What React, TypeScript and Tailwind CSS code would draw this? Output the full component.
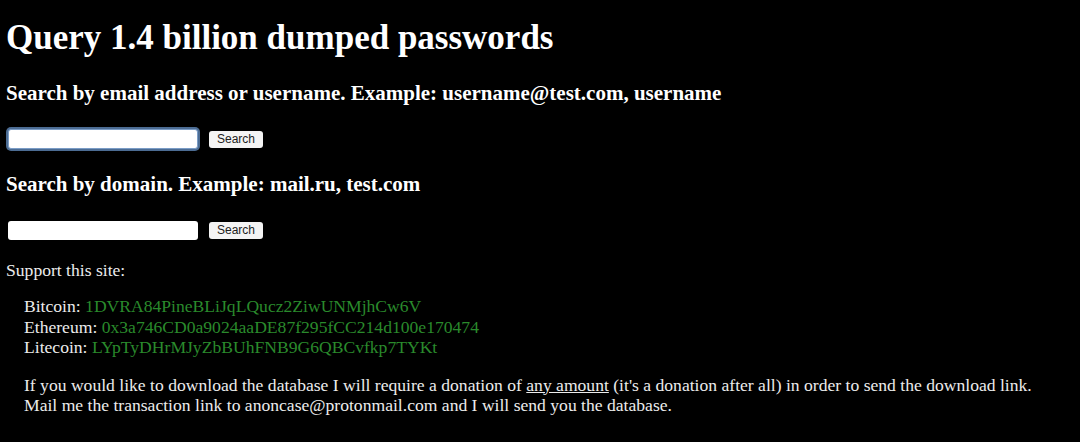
export default function App() {
  return (
    <div className="w-[1080px] h-[442px] bg-black text-[#ececec] font-['Liberation_Serif',serif] overflow-hidden px-[6px]">
      <h1 className="text-[35px] leading-[40px] font-bold text-white pt-[18px]">Query 1.4 billion dumped passwords</h1>

      <h3 className="text-[21px] leading-[24px] font-bold text-white mt-[23px]">
        Search by email address or username. Example: username@test.com, username
      </h3>
      <form className="flex items-center mt-[24px] pl-[2px]" onSubmit={(e) => e.preventDefault()}>
        <input
          type="text"
          className="w-[190px] h-[20px] bg-white rounded-[3px] border border-[#7a9cc6] ring-2 ring-[#5f87b8]/80 outline-none"
        />
        <button className="ml-[11px] w-[54px] h-[17px] bg-[#f4f4f4] rounded-[3px] text-[12px] leading-[17px] text-[#222] font-['Liberation_Sans',sans-serif]">
          Search
        </button>
      </form>

      <h3 className="text-[21px] leading-[24px] font-bold text-white mt-[23px]">
        Search by domain. Example: mail.ru, test.com
      </h3>
      <form className="flex items-center mt-[25px] pl-[2px]" onSubmit={(e) => e.preventDefault()}>
        <input type="text" className="w-[190px] h-[19px] bg-white rounded-[3px] outline-none" />
        <button className="ml-[11px] w-[54px] h-[17px] bg-[#f4f4f4] rounded-[3px] text-[12px] leading-[17px] text-[#222] font-['Liberation_Sans',sans-serif]">
          Search
        </button>
      </form>

      <p className="text-[17.6px] leading-[20px] mt-[20px]">Support this site:</p>

      <div className="pl-[18px] mt-[16px] text-[17.6px] leading-[20.5px]">
        <div>
          Bitcoin: <span className="text-[#2a8a2c]">1DVRA84PineBLiJqLQucz2ZiwUNMjhCw6V</span>
        </div>
        <div>
          Ethereum: <span className="text-[#2a8a2c]">0x3a746CD0a9024aaDE87f295fCC214d100e170474</span>
        </div>
        <div>
          Litecoin: <span className="text-[#2a8a2c]">LYpTyDHrMJyZbBUhFNB9G6QBCvfkp7TYKt</span>
        </div>

        <p className="mt-[17px] leading-[20px]">
          If you would like to download the database I will require a donation of{" "}
          <span className="underline">any amount</span> (it's a donation after all) in order to send the download link.
          <br />
          Mail me the transaction link to anoncase@protonmail.com and I will send you the database.
        </p>
      </div>
    </div>
  );
}
